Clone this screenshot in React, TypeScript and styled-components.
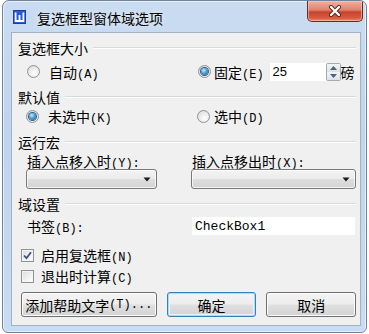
import React from 'react';
import styled, { createGlobalStyle } from 'styled-components';

const GlobalStyle = createGlobalStyle`
	html, body {
		margin: 0;
		padding: 0;
		background: #ffffff;
	}
	body {
		font-family: "Noto Sans CJK SC", "Noto Sans", sans-serif;
		font-size: 14px;
		color: #000000;
	}
	* {
		box-sizing: border-box;
	}
`

interface RadioProps {
	checked?: boolean;
}

const RadioMark = ({ checked }: RadioProps) => (
	<RadioCircle>
		{checked && <RadioDot />}
	</RadioCircle>
);

const CheckMark = ({ checked }: RadioProps) => (
	<CheckSquare>
		{checked &&
			<svg width="9" height="9" viewBox="0 0 9 9">
				<path d="M1 4.5 L3.5 7.2 L8 1.2" fill="none" stroke="#3b4f86" strokeWidth="1.8" />
			</svg>
		}
	</CheckSquare>
);

const ArrowDown = () => (
	<svg width="8" height="5" viewBox="0 0 8 5">
		<path d="M0.5 0.5 L7.5 0.5 L4 4.5 Z" fill="#1a1a1a" />
	</svg>
);

const AppIcon = () => (
	<svg width="13" height="14" viewBox="0 0 13 14">
		<rect x="0" y="0" width="13" height="14" fill="#2a5bd7" />
		<rect x="0.5" y="0.5" width="12" height="13" fill="none" stroke="#1b3f9c" />
		<path d="M2.6 2.5 L2.6 11 L10.4 11 L10.4 2.5 M6.5 5 L6.5 11" fill="none" stroke="#ffffff" strokeWidth="1.8" />
	</svg>
);

const CloseGlyph = () => (
	<svg width="14" height="12" viewBox="0 0 14 12">
		<path d="M3 2 L11 10 M11 2 L3 10" stroke="#5a1c12" strokeWidth="4" strokeLinecap="round" />
		<path d="M3 2 L11 10 M11 2 L3 10" stroke="#ffffff" strokeWidth="2.4" strokeLinecap="round" />
	</svg>
);

export default function App() {
	return (
		<>
			<GlobalStyle />
			<Window>
				<TitleBar>
					<AppIcon />
					<Title>复选框型窗体域选项</Title>
					<CloseButton title="关闭">
						<CloseGlyph />
					</CloseButton>
				</TitleBar>
				<Content>
					<GroupHeader top={6}>
						<span>复选框大小</span>
						<HeaderLine />
					</GroupHeader>
					<Columns height={29}>
						<Option offset={1} gap={9}>
							<RadioMark />
							<span>自动<Key>(A)</Key></span>
						</Option>
						<Option offset={7} gap={3}>
							<RadioMark checked />
							<span>固定<Key>(E)</Key></span>
							<SizeField>
								<NumberInput>25</NumberInput>
								<Spinner>
									<SpinHalf>
										<svg width="7" height="4" viewBox="0 0 7 4"><path d="M0 4 L3.5 0 L7 4 Z" fill="#4d6185" /></svg>
									</SpinHalf>
									<SpinHalf>
										<svg width="7" height="4" viewBox="0 0 7 4"><path d="M0 0 L3.5 4 L7 0 Z" fill="#4d6185" /></svg>
									</SpinHalf>
								</Spinner>
								<Unit>磅</Unit>
							</SizeField>
						</Option>
					</Columns>

					<GroupHeader top={2}>
						<span>默认值</span>
						<HeaderLine />
					</GroupHeader>
					<Columns height={20}>
						<Option offset={0} gap={9}>
							<RadioMark checked />
							<span>未选中<Key>(K)</Key></span>
						</Option>
						<Option offset={6} gap={4}>
							<RadioMark />
							<span>选中<Key>(D)</Key></span>
						</Option>
					</Columns>

					<GroupHeader top={7}>
						<span>运行宏</span>
						<HeaderLine />
					</GroupHeader>
					<Columns height={36} top={2}>
						<Field>
							<FieldLabel>插入点移入时<Key>(Y):</Key></FieldLabel>
							<Select width={131}>
								<ArrowDown />
							</Select>
						</Field>
						<Field>
							<FieldLabel>插入点移出时<Key>(X):</Key></FieldLabel>
							<Select width={165}>
								<ArrowDown />
							</Select>
						</Field>
					</Columns>

					<GroupHeader top={6}>
						<span>域设置</span>
						<HeaderLine />
					</GroupHeader>
					<Columns height={20} top={3}>
						<Option offset={1} gap={0}>
							<span>书签<Key>(B):</Key></span>
						</Option>
						<TextInput>CheckBox1</TextInput>
					</Columns>

					<CheckRow top={9}>
						<CheckMark checked />
						<span>启用复选框<Key>(N)</Key></span>
					</CheckRow>
					<CheckRow top={1}>
						<CheckMark />
						<span>退出时计算<Key>(C)</Key></span>
					</CheckRow>

					<Buttons>
						<Button width={136}>添加帮助文字<Key>(T)...</Key></Button>
						<Button width={90} primary>确定</Button>
						<Button width={90}>取消</Button>
					</Buttons>
				</Content>
			</Window>
		</>
	);
}

const Window = styled.div`
	display: flex;
	flex-direction: column;
	margin-left: 2px;
	width: 365px;
	height: 333px;
	border: 1px solid #6e839c;
	border-radius: 7px 7px 6px 6px;
	background: linear-gradient(180deg, #c9dcf1 0%, #bed5ee 40%, #c8dcf2 100%);
	box-shadow: inset 0 0 0 1px rgba(255, 255, 255, 0.55);
	overflow: hidden;
`

const TitleBar = styled.div`
	display: flex;
	align-items: center;
	height: 31px;
	padding-left: 10px;
	flex-shrink: 0;
`

const Title = styled.div`
	margin-left: 11px;
	margin-top: 2px;
	font-size: 14px;
	color: #000000;
	text-shadow: 0 0 6px rgba(255, 255, 255, 0.9);
`

const CloseButton = styled.div`
	display: flex;
	align-items: center;
	justify-content: center;
	align-self: flex-start;
	margin-left: auto;
	margin-right: 3px;
	width: 56px;
	height: 21px;
	border: 1px solid #6b2b22;
	border-top: 0;
	border-radius: 0 0 5px 5px;
	background: linear-gradient(180deg, #eeb1a2 0%, #e0826a 45%, #c8432c 55%, #d65b40 85%, #e89070 100%);
	box-shadow: inset 0 0 0 1px rgba(255, 210, 200, 0.5);
`

const Content = styled.div`
	display: flex;
	flex-direction: column;
	margin: 0 5px 0 8px;
	height: 294px;
	border: 1px solid #a3b2c3;
	background: #f0f0f0;
	padding: 0 4px 0 6px;
`

const GroupHeader = styled.div<{ top: number }>`
	display: flex;
	align-items: center;
	height: 18px;
	margin-top: ${props => props.top}px;
	white-space: nowrap;
	flex-shrink: 0;
`

const HeaderLine = styled.div`
	flex: 1;
	height: 2px;
	margin-left: 5px;
	border-top: 1px solid #d6dbe0;
	border-bottom: 1px solid #ffffff;
`

const Key = styled.span`
	font-family: "Liberation Mono", monospace;
	font-size: 12px;
`

const Columns = styled.div<{ height: number; top?: number }>`
	display: grid;
	grid-template-columns: 165px 165px;
	align-items: center;
	height: ${props => props.height}px;
	margin-top: ${props => props.top || 0}px;
	padding-left: 8px;
	flex-shrink: 0;
`

const Option = styled.div<{ offset: number; gap: number }>`
	display: flex;
	align-items: center;
	gap: ${props => props.gap}px;
	margin-left: ${props => props.offset}px;
	white-space: nowrap;
`

const RadioCircle = styled.div`
	display: flex;
	align-items: center;
	justify-content: center;
	width: 13px;
	height: 13px;
	border-radius: 50%;
	border: 1px solid #8f9296;
	background: radial-gradient(circle at 60% 65%, #ffffff 0%, #f1f1f1 35%, #d4d4d4 100%);
	flex-shrink: 0;
`

const RadioDot = styled.div`
	width: 7px;
	height: 7px;
	border-radius: 50%;
	background: radial-gradient(circle at 40% 35%, #c9ecff 0%, #4d9fd6 45%, #1b4f86 100%);
	box-shadow: 0 0 0 1px #2a5b8c;
`

const SizeField = styled.div`
	display: flex;
	align-items: center;
	margin-left: 3px;
`

const NumberInput = styled.div`
	display: flex;
	align-items: center;
	width: 56px;
	height: 18px;
	padding-left: 3px;
	background: #ffffff;
	font-family: "Liberation Sans", sans-serif;
	font-size: 13px;
`

const Spinner = styled.div`
	display: flex;
	flex-direction: column;
	width: 15px;
	height: 18px;
	border: 1px solid #a6aab2;
	border-radius: 2px;
	background: #ffffff;
`

const SpinHalf = styled.div`
	display: flex;
	align-items: center;
	justify-content: center;
	flex: 1;
	background: linear-gradient(180deg, #f3f4f6 0%, #dde1e7 100%);
`

const Unit = styled.span`
	margin-left: 0;
`

const Field = styled.div`
	display: flex;
	flex-direction: column;
`

const FieldLabel = styled.div`
	height: 16px;
	line-height: 16px;
	margin-left: 1px;
	white-space: nowrap;
`

const Select = styled.div<{ width: number }>`
	display: flex;
	align-items: center;
	justify-content: flex-end;
	width: ${props => props.width}px;
	height: 20px;
	padding-right: 5px;
	border: 1px solid #7a7a7a;
	border-radius: 3px;
	background: linear-gradient(180deg, #f3f3f3 0%, #ececec 48%, #dedede 52%, #d4d4d4 100%);
	box-shadow: inset 0 0 0 1px rgba(255, 255, 255, 0.7);
`

const TextInput = styled.div`
	display: flex;
	align-items: center;
	height: 20px;
	padding-left: 3px;
	background: #ffffff;
	border: 1px solid #eef0f2;
	font-family: "Liberation Mono", monospace;
	font-size: 13px;
`

const CheckRow = styled.div<{ top: number }>`
	display: flex;
	align-items: center;
	gap: 7px;
	height: 20px;
	margin-top: ${props => props.top}px;
	padding-left: 3px;
	flex-shrink: 0;
`

const CheckSquare = styled.div`
	display: flex;
	align-items: center;
	justify-content: center;
	width: 13px;
	height: 13px;
	border: 1px solid #8f9296;
	background: linear-gradient(135deg, #dcdcdc 0%, #f2f2f2 60%, #ffffff 100%);
	box-shadow: inset 0 0 0 1px #f4f4f4;
`

const Buttons = styled.div`
	display: flex;
	align-items: center;
	gap: 10px;
	margin-top: 6px;
	padding-left: 3px;
`

const Button = styled.div<{ width: number; primary?: boolean }>`
	display: flex;
	align-items: center;
	justify-content: center;
	width: ${props => props.width}px;
	height: 25px;
	border: 1px solid ${props => props.primary ? "#3c7fb1" : "#707070"};
	border-radius: 3px;
	background: linear-gradient(180deg, #f4f4f4 0%, #ededed 48%, #e0e0e0 52%, #d3d3d3 100%);
	box-shadow: ${props => props.primary ? "inset 0 0 0 1px #a8dcf6, inset 0 0 0 2px #e6f5fd" : "inset 0 0 0 1px #fcfcfc"};
	white-space: nowrap;
`
